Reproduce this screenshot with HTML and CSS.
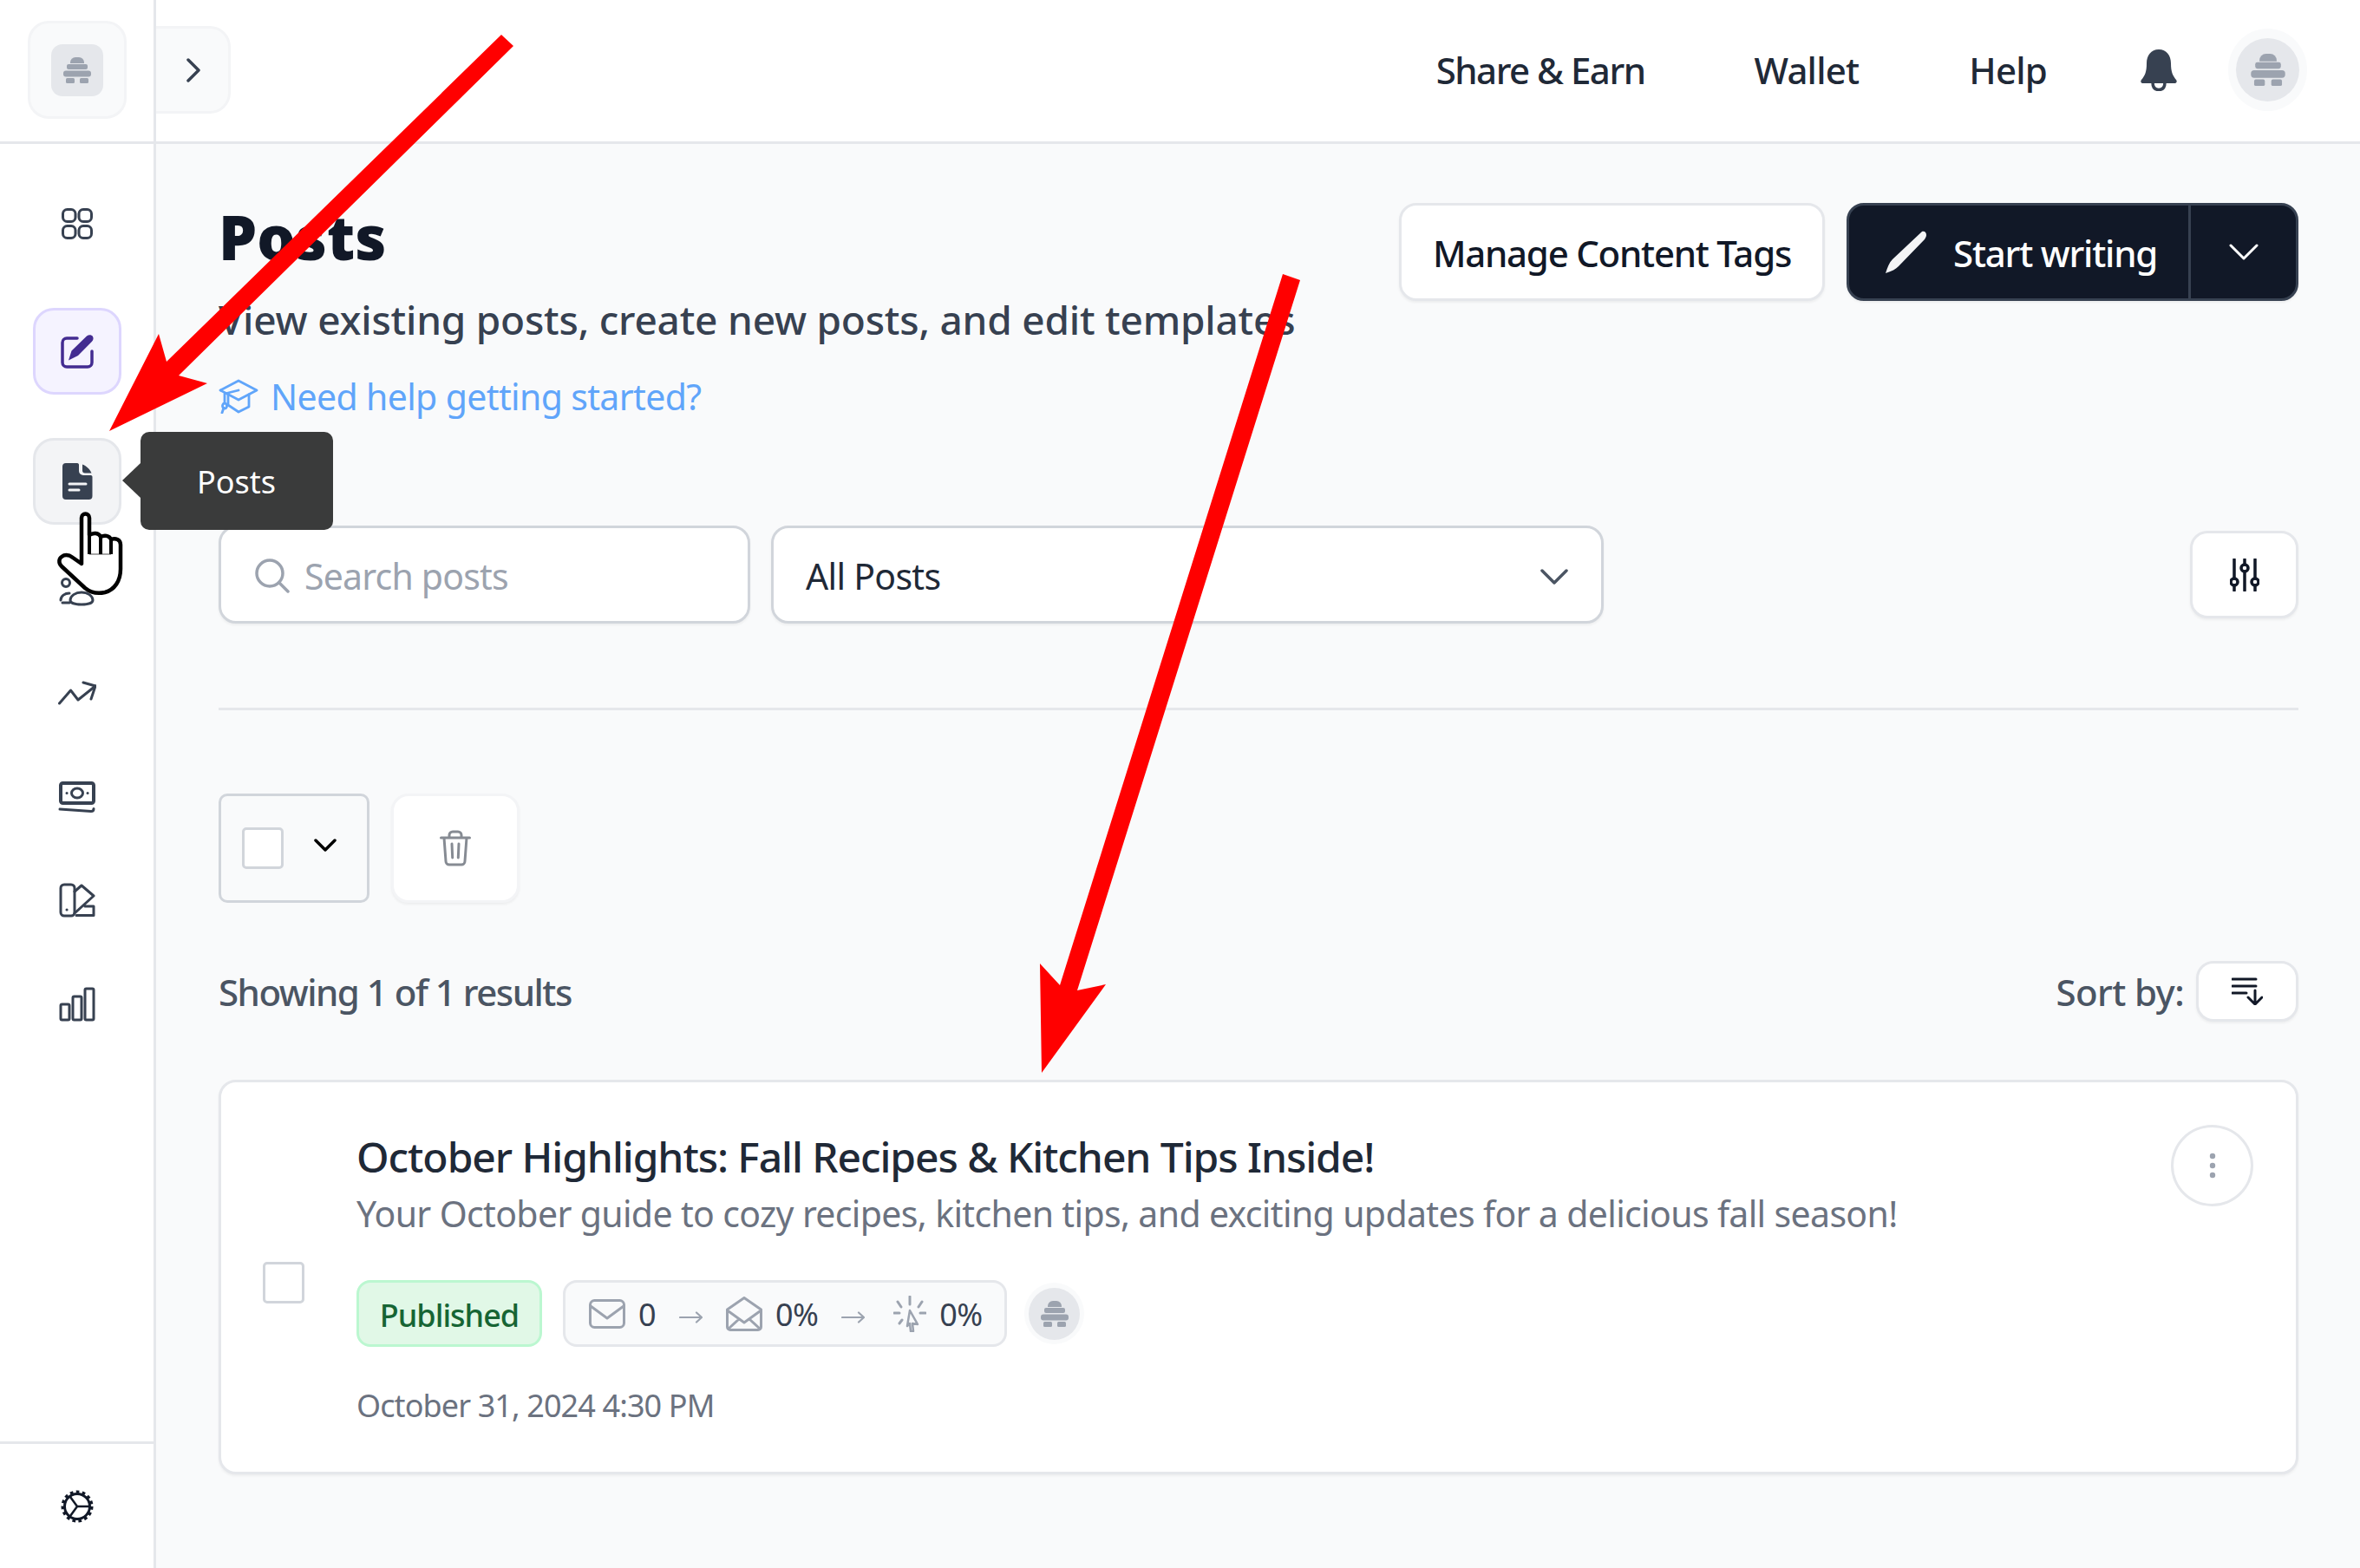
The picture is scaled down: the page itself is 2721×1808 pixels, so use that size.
FILE: index.html
```html
<!DOCTYPE html>
<html lang="en">
<head>
<meta charset="utf-8">
<title>Posts</title>
<link rel="stylesheet" href="styles.css">
</head>
<body>
<svg width="0" height="0" class="defs">
  <symbol id="hive" viewBox="0 0 32 30">
    <path d="M8 7V6a6 6 0 0 1 6-6h4a6 6 0 0 1 6 6v1z"/>
    <rect x="4" y="8" width="24" height="6" rx="2"/>
    <rect x="0" y="15.500" width="32" height="7" rx="3"/>
    <rect x="3" y="24" width="10" height="6" rx="1.500"/>
    <rect x="19" y="24" width="10" height="6" rx="1.500"/>
  </symbol>
</svg>
<div class="app">
  <aside class="sidebar">
    <div class="brand">
      <div class="brand-box"><div class="brand-mark"><svg class="hive-lg"><use href="#hive"/></svg></div></div>
    </div>
    <nav class="nav">
      <a class="nav-item">
        <svg width="38" height="38" viewBox="0 0 38 38" class="ic-line"><rect x="2.500" y="2.500" width="14.500" height="14" rx="5"/><rect x="21" y="2.500" width="14.500" height="14" rx="5"/><rect x="2.500" y="21.500" width="14.500" height="14" rx="5"/><rect x="21" y="21.500" width="14.500" height="14" rx="5"/></svg>
      </a>
      <a class="nav-item nav-active">
        <svg width="40" height="40" viewBox="0 0 40 40" class="ic-purple"><path class="frame" d="M20 5H8a5 5 0 0 0-5 5v23a5 5 0 0 0 5 5h24a5 5 0 0 0 5-5V20"/><path class="nib" d="M31 2.500c2.500-1.800 5.500-1.500 6.800.3s1 4.200-1 6.200L21 25 10 30.500l3.500-11z"/></svg>
      </a>
      <a class="nav-item nav-hover">
        <svg width="36" height="44" viewBox="0 0 36 44"><path class="doc" d="M5 1h13c1.500 0 2 1 2 2v7a5 5 0 0 0 5 5h8c1.500 0 2.500.6 2.500 2v22a4 4 0 0 1-4 4H5a4 4 0 0 1-4-4V5a4 4 0 0 1 4-4z"/><path class="doc" d="M24 2.500c5 2 9 6 10.500 10H27a3 3 0 0 1-3-3z"/><path class="doc-lines" d="M9 25h19M9 32h11"/></svg>
        <div class="tooltip">Posts</div>
      </a>
      <a class="nav-item">
        <svg width="44" height="34" viewBox="0 0 44 34" class="ic-line"><circle cx="9" cy="7" r="4.500"/><path d="M3 27c0-5 5-8 10-8M14 27c0-5 6-9 13-9s13 4 13 9c0 3-5 5-13 5s-13-2-13-5zM5 30h8"/></svg>
      </a>
      <a class="nav-item">
        <svg width="44" height="28" viewBox="0 0 44 28" class="ic-line"><path d="M1.500 26L14.500 11 23 22 43 6"/><path d="M29 2l14 4-5 15"/></svg>
      </a>
      <a class="nav-item">
        <svg width="44" height="38" viewBox="0 0 44 38" class="ic-line"><rect x="3" y="3" width="38" height="23" rx="2.500" class="thick"/><ellipse cx="22" cy="14.500" rx="6.500" ry="5.500"/><path d="M2 33l36 2.500c2 0 3-1 3-3"/><path d="M10 14.500h.1M34 14.500h.1"/></svg>
      </a>
      <a class="nav-item">
        <svg width="42" height="40" viewBox="0 0 42 40" class="ic-line"><path d="M2 6a4 4 0 0 1 4-4h8a4 4 0 0 1 4 4v28a4 4 0 0 1-4 4H6a4 4 0 0 1-4-4z"/><path d="M18 10l8-7 14 12-22 20M20 37.500h20V27H30"/><path d="M9 31h.1"/></svg>
      </a>
      <a class="nav-item">
        <svg width="42" height="40" viewBox="0 0 42 40" class="ic-line"><rect x="2" y="20" width="10" height="18" rx="1.500"/><rect x="16" y="11" width="10" height="27" rx="1.500"/><rect x="30" y="2" width="10" height="36" rx="1.500"/></svg>
      </a>
    </nav>
    <div class="side-foot">
      <svg width="40" height="40" viewBox="0 0 40 40" class="ic-gear"><circle cx="20" cy="20" r="16" class="teeth"/><circle cx="20" cy="20" r="14.500"/><path d="M20 20L12 9M20 20L12 31M20 20h15"/></svg>
    </div>
  </aside>

  <div class="main">
    <header class="topbar">
      <button class="collapse"><svg width="16" height="28" viewBox="0 0 16 28" class="ic-chev"><path d="M2 2l12 12L2 26"/></svg></button>
      <div class="top-links">
        <a class="top-link link-share">Share &amp; Earn</a>
        <a class="top-link link-wallet">Wallet</a>
        <a class="top-link link-help">Help</a>
        <svg width="44" height="48" viewBox="0 0 44 48" class="bell"><path d="M22 0C13 0 8 7 8 16c0 10-2 14-6 19-1.500 2-.5 4 2 4h36c2.500 0 3.500-2 2-4-4-5-6-9-6-19 0-9-5-16-14-16z"/><path class="clap" d="M15 38c0 6 3 8.500 7 8.500s7-2.500 7-8.500"/></svg>
        <div class="avatar"><div class="avatar-in"><svg class="hive-md"><use href="#hive"/></svg></div></div>
      </div>
    </header>

    <main class="content">
      <section class="page-head">
        <div class="head-text">
          <h1 class="title">Posts</h1>
          <p class="desc">View existing posts, create new posts, and edit templates</p>
          <a class="help">
            <svg width="46" height="40" viewBox="0 0 46 40" class="ic-cap"><path d="M23 2L2 13l21 11 21-11z"/><path d="M11 18v12l12 8 12-6V18"/><path d="M23 13L7 17v11M7 28a2.500 3 0 1 0 .1 0M6 33l-2 6"/></svg>
            <span>Need help getting started?</span>
          </a>
        </div>
        <div class="head-actions">
          <button class="btn-outline">Manage Content Tags</button>
          <div class="btn-split">
            <button class="btn-dark">
              <svg width="50" height="50" viewBox="0 0 50 50" class="pen"><path d="M44 1c3-1 5 1 5 4 0 2-1 3-2 5L17 41c-3 3-8 6-15 8 2-6 4-12 8-16z"/></svg>
              <span>Start writing</span>
            </button>
            <button class="btn-caret"><svg width="34" height="20" viewBox="0 0 34 20" class="ic-chev-w"><path d="M2 2l15 15L32 2"/></svg></button>
          </div>
        </div>
      </section>

      <section class="filters">
        <div class="search">
          <svg width="40" height="40" viewBox="0 0 40 40" class="ic-search"><circle cx="17" cy="17" r="15"/><path d="M28 28l10 10"/></svg>
          <span>Search posts</span>
        </div>
        <div class="select">
          <span>All Posts</span>
          <svg width="32" height="18" viewBox="0 0 32 18" class="ic-chev-d"><path d="M2 2l14 14L30 2"/></svg>
        </div>
        <button class="btn-filter">
          <svg width="34" height="38" viewBox="0 0 34 38" class="ic-slide"><path d="M5 1v22M5 31v6M17 1v6M17 15v22M29 1v22M29 31v6"/><circle cx="5" cy="27" r="4"/><circle cx="17" cy="11" r="4"/><circle cx="29" cy="27" r="4"/></svg>
        </button>
      </section>

      <hr class="rule">

      <section class="bulk">
        <div class="bulk-select">
          <span class="check"></span>
          <svg width="26" height="16" viewBox="0 0 26 16" class="ic-chev-b"><path d="M2 2l11 11L24 2"/></svg>
        </div>
        <button class="btn-trash">
          <svg width="36" height="42" viewBox="0 0 36 42" class="ic-trash"><path d="M1.500 9h33M5 9l2 27a4 4 0 0 0 4 4h14a4 4 0 0 0 4-4l2-27M11 9V6a4 4 0 0 1 4-4h6a4 4 0 0 1 4 4v3M14 16l.7 16M22 16l-.7 16"/></svg>
        </button>
      </section>

      <section class="results">
        <span class="count">Showing 1 of 1 results</span>
        <div class="sort">
          <span class="sort-label">Sort by:</span>
          <button class="btn-sort">
            <svg width="36" height="32" viewBox="0 0 36 32" class="ic-sort"><path d="M1 2h27M1 10h27M1 18h16M27 15v15M19 23l8 8 8-8"/></svg>
          </button>
        </div>
      </section>

      <article class="card">
        <span class="check card-check"></span>
        <div class="card-body">
          <h2 class="card-title">October Highlights: Fall Recipes &amp; Kitchen Tips Inside!</h2>
          <p class="card-sub">Your October guide to cozy recipes, kitchen tips, and exciting updates for a delicious fall season!</p>
          <div class="meta">
            <span class="badge">Published</span>
            <div class="stats">
              <svg width="42" height="34" viewBox="0 0 42 34" class="ic-gray"><rect x="1.500" y="1.500" width="39" height="31" rx="5"/><path d="M2 8l19 14L40 8"/></svg>
              <span class="num">0</span>
              <svg width="27" height="14" viewBox="0 0 27 14" class="flow"><path d="M1 7h25M20 1.500L26 7l-6 5.500"/></svg>
              <svg width="42" height="40" viewBox="0 0 42 40" class="ic-gray"><path d="M1.500 15L21 1.500 40.500 15v20a3.500 3.500 0 0 1-3.500 3.500H5A3.500 3.500 0 0 1 1.500 35z"/><path d="M3 17l18 13 18-13M3 37l12-11M39 37L27 26"/></svg>
              <span class="num">0%</span>
              <svg width="27" height="14" viewBox="0 0 27 14" class="flow"><path d="M1 7h25M20 1.500L26 7l-6 5.500"/></svg>
              <svg width="38" height="42" viewBox="0 0 38 42" class="ic-gray ic-click"><path d="M19 1v9M5 7l4 6M33 7l-4 6M1 20h6M31 20h6M7 32l3-4"/><path class="cursor" d="M19 17l9 16-6-1 1 9h-3l-1-9-3 3z"/></svg>
              <span class="num">0%</span>
            </div>
            <div class="mini-avatar"><div class="mini-in"><svg class="hive-sm"><use href="#hive"/></svg></div></div>
          </div>
          <time class="date">October 31, 2024 4:30 PM</time>
        </div>
        <button class="btn-dots"><svg width="8" height="30" viewBox="0 0 8 30" class="ic-dots"><circle cx="4" cy="4" r="3.200"/><circle cx="4" cy="15" r="3.200"/><circle cx="4" cy="26" r="3.200"/></svg></button>
      </article>
    </main>
  </div>
</div>

<svg class="hand" width="120" height="130" viewBox="0 0 120 130">
  <path class="hand-fill" d="M44 17a4.500 4.500 0 0 1 9 0V37c4-3 11-3 13 2 4-2 10-2 12 3 5-2 11 0 11 6v28c0 14-7 24-18 27-9 2-17 0-23-5L21 73c-4-4-3-9 0-11 4-3 9-2 13 1l10 7z"/>
  <path class="hand-thin" d="M53 59h25"/>
  <path class="hand-sep" d="M53 37v22M66 39v20M78 42v17"/>
</svg>

<svg class="arrows" width="2721" height="1808" viewBox="0 0 2721 1808">
  <polygon points="578,40 592,53 206,433 239,442 126,497 183,385 192,417"/>
  <polygon points="1479,316 1499,323 1242,1142 1275,1135 1201,1237 1199,1111 1222,1136"/>
</svg>
</body>
</html>
```
FILE: styles.css
```css
* { box-sizing: border-box; }
html, body { margin: 0; padding: 0; }
body {
  width: 2721px;
  height: 1808px;
  overflow: hidden;
  position: relative;
  background: #fff;
  font-family: "Noto Sans", "Open Sans", sans-serif;
  color: #111827;
}
button { font-family: inherit; padding: 0; cursor: pointer; }
svg { display: block; fill: none; flex: none; }
.defs { position: absolute; }
.app { display: flex; height: 1808px; }

/* sidebar */
.sidebar {
  width: 180px;
  flex: none;
  display: flex;
  flex-direction: column;
  border-right: 3px solid #e5e7eb;
  background: #fff;
}
.brand {
  height: 166px;
  border-bottom: 3px solid #e5e7eb;
  padding: 24px 0 0 32px;
}
.brand-box {
  width: 114px;
  height: 113px;
  border: 3px solid #f3f4f6;
  border-radius: 24px;
  background: #f9fafb;
  display: flex;
  align-items: center;
  justify-content: center;
}
.brand-mark {
  width: 60px;
  height: 60px;
  border-radius: 13px;
  background: #e5e7eb;
  display: flex;
  align-items: center;
  justify-content: center;
}
.hive-lg { width: 32px; height: 30px; fill: #9ca3af; }
.hive-md { width: 40px; height: 37px; fill: #9ca3af; }
.hive-sm { width: 32px; height: 30px; fill: #9ca3af; }

.nav {
  display: grid;
  grid-template-rows: 147px 150px 127px 117px 120px 119px 120px 100px;
  justify-items: center;
  padding-top: 42px;
}
.nav-item {
  position: relative;
  width: 102px;
  height: 100px;
  border-radius: 24px;
  border: 3px solid transparent;
  display: flex;
  align-items: center;
  justify-content: center;
}
.nav-active { background: #f5f3ff; border-color: #ddd6fe; }
.nav-hover { background: #f3f4f6; border-color: #e5e7eb; }
.ic-line { stroke: #374151; stroke-width: 3; stroke-linecap: round; stroke-linejoin: round; }
.ic-line .thick { stroke-width: 4; }
.ic-purple .frame { stroke: #432c91; stroke-width: 3.500; stroke-linecap: round; }
.ic-purple .nib { fill: #432c91; }
.doc { fill: #374151; }
.doc-lines { stroke: #f3f4f6; stroke-width: 3; stroke-linecap: round; }
.tooltip {
  position: absolute;
  left: 121px;
  top: -10px;
  width: 222px;
  height: 113px;
  background: #3a3b3b;
  border-radius: 10px;
  color: #fff;
  font-size: 36px;
  line-height: 116px;
  text-align: center;
  z-index: 5;
}
.tooltip::before {
  content: "";
  position: absolute;
  left: -21px;
  top: 36px;
  border-style: solid;
  border-width: 20px 21px 20px 0;
  border-color: transparent #3a3b3b transparent transparent;
}
.side-foot {
  margin-top: auto;
  height: 146px;
  border-top: 3px solid #e5e7eb;
  display: flex;
  align-items: center;
  justify-content: center;
}
.ic-gear { stroke: #111827; stroke-width: 3; }
.ic-gear .teeth { stroke-width: 5; stroke-dasharray: 3.500 3.200; }
.ic-gear path { stroke-width: 2.500; }

/* top bar */
.main { flex: 1; min-width: 0; display: flex; flex-direction: column; }
.topbar {
  height: 166px;
  flex: none;
  background: #fff;
  border-bottom: 3px solid #e5e7eb;
  display: flex;
  align-items: flex-start;
  justify-content: space-between;
}
.collapse {
  margin-top: 30px;
  width: 86px;
  height: 101px;
  border: 3px solid #f3f4f6;
  border-left: 0;
  border-radius: 0 24px 24px 0;
  background: #f9fafb;
  display: flex;
  align-items: center;
  justify-content: center;
  padding-left: 2px;
}
.ic-chev { stroke: #374151; stroke-width: 3.500; stroke-linecap: round; stroke-linejoin: round; }
.top-links {
  display: flex;
  align-items: center;
  padding: 33px 61px 0 0;
  height: 128px;
  font-size: 42px;
  color: #1f2937;
}
.top-link { font-weight: 500; line-height: 95px; letter-spacing: -0.8px; }
.link-share { margin-right: 126px; letter-spacing: -1.5px; }
.link-wallet { margin-right: 127px; }
.link-help { margin-right: 107px; }
.bell { fill: #374151; margin-right: 58px; }
.bell .clap { fill: none; stroke: #374151; stroke-width: 3.500; }
.avatar {
  width: 91px;
  height: 95px;
  border-radius: 50%;
  background: #f9fafb;
  display: flex;
  align-items: center;
  justify-content: center;
}
.avatar-in {
  width: 73px;
  height: 73px;
  border-radius: 50%;
  background: #e5e7eb;
  display: flex;
  align-items: center;
  justify-content: center;
}

/* content */
.content { flex: 1; background: #f9fafb; padding: 68px 71px 0 72px; }
.page-head { display: flex; justify-content: space-between; align-items: flex-start; }
.head-text { display: flex; flex-direction: column; }
.title { margin: 0; font-size: 70px; line-height: 79px; font-weight: 900; color: #111827; }
.desc { margin: 25px 0 0; font-size: 46px; line-height: 60px; font-weight: 500; color: #374151; letter-spacing: -0.22px; white-space: nowrap; }
.help { margin-top: 31px; display: flex; align-items: center; gap: 14px; font-size: 41px; line-height: 56px; letter-spacing: -0.65px; color: #60a5fa; }
.ic-cap { stroke: #60a5fa; stroke-width: 2.800; stroke-linejoin: round; stroke-linecap: round; }
.head-actions { display: flex; gap: 25px; }
.btn-outline {
  width: 491px;
  height: 113px;
  border: 3px solid #e5e7eb;
  border-radius: 20px;
  background: #fff;
  font-size: 42px;
  font-weight: 500;
  color: #111827;
  letter-spacing: -1.25px;
  padding-top: 2px;
  box-shadow: 0 2px 3px rgba(0,0,0,.05);
}
.btn-split {
  width: 521px;
  height: 113px;
  display: flex;
  background: #111827;
  border: 3px solid #374151;
  border-radius: 20px;
  box-shadow: 0 2px 3px rgba(0,0,0,.05);
}
.btn-dark {
  width: 394px;
  border: 0;
  border-right: 3px solid #374151;
  background: none;
  color: #fff;
  font-size: 42px;
  font-weight: 500;
  letter-spacing: -1.2px;
  display: flex;
  align-items: center;
  padding: 2px 0 0 40px;
  gap: 30px;
}
.pen { fill: #f3f4f6; margin-top: -2px; }
.btn-caret { flex: 1; border: 0; background: none; display: flex; align-items: center; justify-content: center; }
.ic-chev-w { stroke: #fff; stroke-width: 3; stroke-linecap: round; stroke-linejoin: round; }

.filters { display: flex; align-items: center; margin-top: 121px; }
.search, .select {
  height: 113px;
  border: 3px solid #d1d5db;
  border-radius: 20px;
  background: #fff;
  display: flex;
  align-items: center;
  font-size: 41px;
  padding-top: 2px;
  box-shadow: 0 2px 3px rgba(0,0,0,.05);
}
.search { width: 613px; padding-left: 39px; gap: 17px; color: #9ca3af; letter-spacing: -0.8px; }
.ic-search { stroke: #9ca3af; stroke-width: 3.500; stroke-linecap: round; }
.select { width: 960px; margin-left: 24px; padding: 2px 38px 0 37px; justify-content: space-between; color: #1f2937; letter-spacing: -0.7px; }
.ic-chev-d { stroke: #4b5563; stroke-width: 3.500; stroke-linecap: round; stroke-linejoin: round; margin-top: 2px; }
.btn-filter {
  margin-left: auto;
  width: 125px;
  height: 101px;
  border: 3px solid #e5e7eb;
  border-radius: 20px;
  background: #fff;
  display: flex;
  align-items: center;
  justify-content: center;
  box-shadow: 0 2px 3px rgba(0,0,0,.05);
}
.ic-slide { stroke: #111827; stroke-width: 3.500; stroke-linecap: round; }
.rule { border: 0; border-top: 3px solid #e5e7eb; margin: 97px 0 0; }

.bulk { display: flex; gap: 25px; margin-top: 96px; }
.bulk-select {
  width: 174px;
  height: 126px;
  border: 3px solid #d1d5db;
  border-radius: 10px;
  display: flex;
  align-items: center;
  padding-left: 24px;
  gap: 35px;
}
.bulk-select svg { margin-top: -6px; }
.ic-chev-b { stroke: #000; stroke-width: 3.500; stroke-linecap: round; stroke-linejoin: round; }
.check {
  display: block;
  width: 48px;
  height: 48px;
  border: 3px solid #d1d5db;
  border-radius: 5px;
  background: #fff;
  flex: none;
}
.btn-trash {
  width: 148px;
  height: 126px;
  border: 3px solid #f3f4f6;
  border-radius: 20px;
  background: #fff;
  display: flex;
  align-items: center;
  justify-content: center;
  box-shadow: 0 2px 3px rgba(0,0,0,.05);
}
.ic-trash { stroke: #868b93; stroke-width: 3; stroke-linecap: round; stroke-linejoin: round; }

.results { display: flex; justify-content: space-between; align-items: center; margin-top: 67px; height: 70px; }
.count, .sort-label { font-size: 42px; font-weight: 500; color: #4b5563; }
.count { letter-spacing: -1.5px; }
.sort-label { letter-spacing: -0.6px; }
.sort { display: flex; align-items: center; gap: 14px; }
.btn-sort {
  width: 118px;
  height: 70px;
  border: 3px solid #e5e7eb;
  border-radius: 20px;
  background: #fff;
  display: flex;
  align-items: center;
  justify-content: center;
  box-shadow: 0 2px 3px rgba(0,0,0,.05);
}
.ic-sort { stroke: #111827; stroke-width: 3; stroke-linecap: round; stroke-linejoin: round; }

.card {
  margin-top: 67px;
  height: 455px;
  background: #fff;
  border: 3px solid #e5e7eb;
  border-radius: 20px;
  display: flex;
  align-items: flex-start;
  padding: 0 49px 0 48px;
  box-shadow: 0 2px 3px rgba(0,0,0,.05);
}
.card-check { margin-top: 207px; }
.card-body { flex: 1; margin-left: 60px; padding-top: 53px; }
.card-title { margin: 0; font-size: 48px; line-height: 66px; font-weight: 500; color: #1f2937; letter-spacing: -1.07px; }
.card-sub { margin: 2px 0 0; font-size: 41px; line-height: 60px; color: #6b7280; letter-spacing: -0.65px; }
.meta { display: flex; align-items: center; margin-top: 47px; height: 77px; }
.badge {
  width: 214px;
  height: 77px;
  border: 3px solid #bbf7d0;
  border-radius: 16px;
  background: #e1f8e7;
  color: #166534;
  font-size: 36px;
  font-weight: 500;
  letter-spacing: -1px;
  line-height: 75px;
  text-align: center;
}
.stats {
  margin-left: 24px;
  width: 512px;
  height: 77px;
  border: 3px solid #e5e7eb;
  border-radius: 16px;
  background: #f9fafb;
  display: flex;
  align-items: center;
  padding-left: 27px;
  font-size: 36px;
  color: #374151;
}
.num { margin-left: 15px; padding-top: 2px; letter-spacing: -0.6px; }
.flow { margin: 8px 27px 0; stroke: #9ca3af; stroke-width: 2.200; stroke-linecap: round; stroke-linejoin: round; }
.ic-gray { stroke: #9ca3af; stroke-width: 3; stroke-linecap: round; stroke-linejoin: round; }
.ic-gray .cursor { stroke-width: 2.500; }
.ic-click { margin-left: 6px; }
.mini-avatar {
  margin-left: 20px;
  width: 69px;
  height: 71px;
  border-radius: 50%;
  background: #f9fafb;
  display: flex;
  align-items: center;
  justify-content: center;
}
.mini-in {
  width: 59px;
  height: 60px;
  border-radius: 50%;
  background: #e5e7eb;
  display: flex;
  align-items: center;
  justify-content: center;
}
.date { display: block; margin-top: 42px; font-size: 36px; line-height: 52px; color: #6b7280; letter-spacing: -0.9px; }
.btn-dots {
  margin-top: 49px;
  width: 95px;
  height: 94px;
  border: 3px solid #e5e7eb;
  border-radius: 50%;
  background: #fff;
  display: flex;
  align-items: center;
  justify-content: center;
}
.ic-dots { fill: #9ca3af; }

/* annotations drawn over the screenshot */
.hand { position: absolute; left: 50px; top: 580px; z-index: 9; }
.hand-fill { fill: #fff; stroke: #000; stroke-width: 4.500; stroke-linejoin: round; }
.hand-sep { stroke: #000; stroke-width: 4; }
.hand-thin { stroke: #888; stroke-width: 1.500; }
.arrows { position: absolute; left: 0; top: 0; z-index: 10; pointer-events: none; }
.arrows polygon { fill: #ff0000; }
```
